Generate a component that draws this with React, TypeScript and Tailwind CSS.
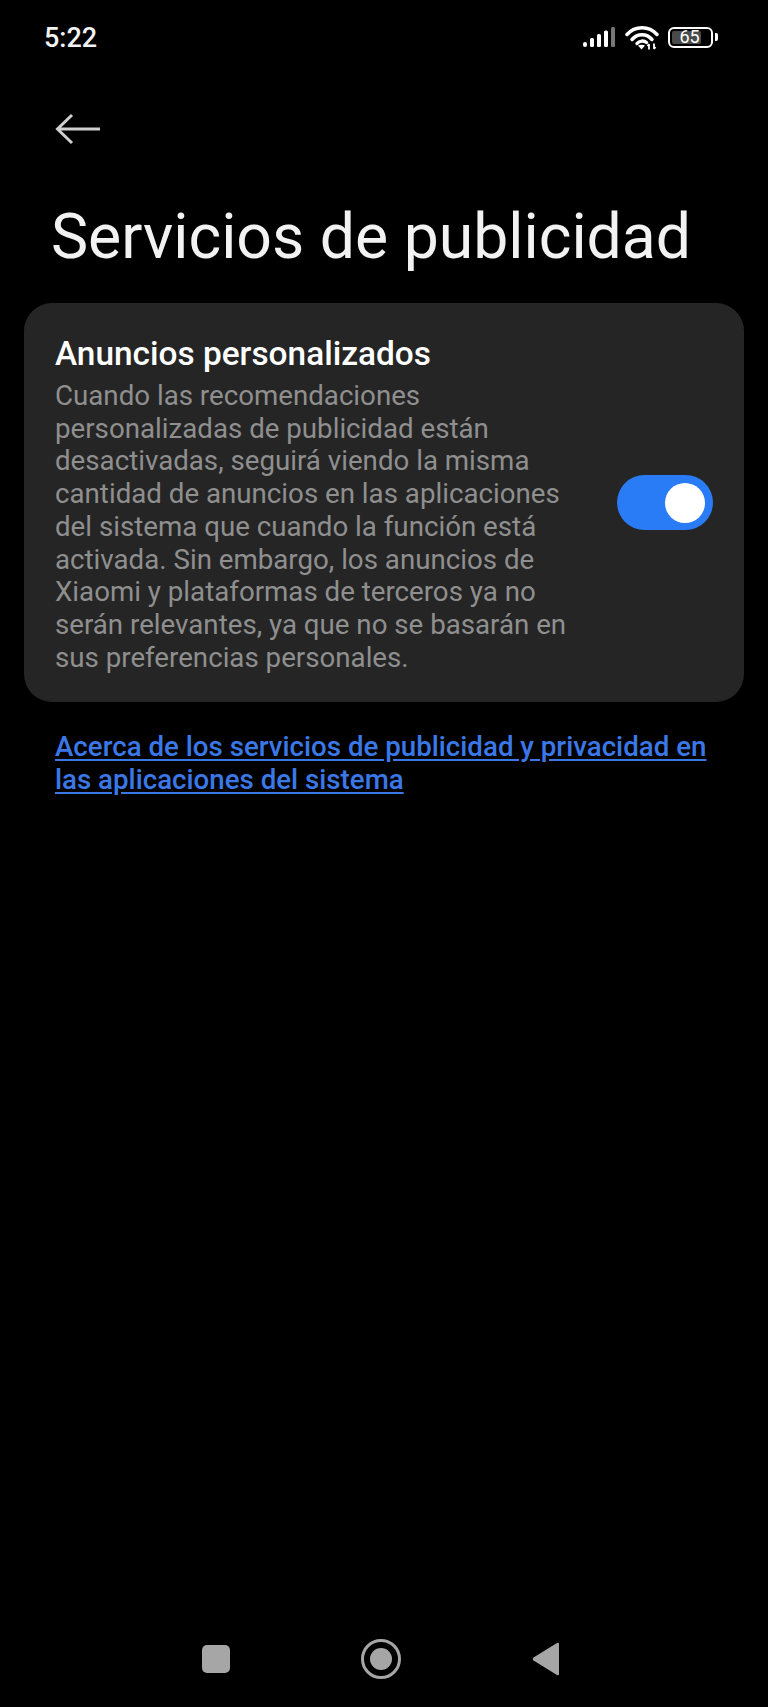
function SignalIcon() {
  return (
    <svg width="33" height="21" viewBox="0 0 33 21" fill="none">
      <rect x="0" y="15" width="4" height="5" rx="2" fill="#fff" />
      <rect x="7" y="11" width="4" height="9" rx="1.5" fill="#fff" />
      <rect x="14" y="7" width="4" height="13" rx="1.5" fill="#fff" />
      <rect x="21" y="3.5" width="4" height="16.5" rx="1.5" fill="#fff" />
      <rect x="28" y="0" width="4" height="20" rx="1.5" fill="#777" />
    </svg>
  );
}

function WifiIcon() {
  return (
    <svg width="34" height="25" viewBox="0 0 34 25" fill="none">
      <path d="M2 9.5C10 0.5 24 0.5 32 9.5" stroke="#fff" strokeWidth="3.5" strokeLinecap="round" />
      <path d="M7 14.5C12.5 8 21.5 8 27 14.5" stroke="#fff" strokeWidth="3.5" strokeLinecap="round" />
      <path d="M12 18.5C14.5 15.5 19 15.5 21.5 17.5" stroke="#fff" strokeWidth="3.5" strokeLinecap="round" />
      <path d="M13 20.5L16.5 24.5L20 20.5C18 19.5 15 19.5 13 20.5Z" fill="#fff" />
      <path d="M24 24.5V19M24 19L22.5 21M29 18.5V24M29 24L30.5 22" stroke="#fff" strokeWidth="1.8" />
    </svg>
  );
}

function Battery() {
  return (
    <div className="flex items-center gap-[2px]">
      <div className="relative w-[45px] h-[21px] rounded-[6px] border-2 border-white p-[2px]">
        <div className="w-[29px] h-full rounded-[2px] bg-[#4a4a4a]" />
        <span className="absolute inset-0 flex items-center justify-center text-[18px] leading-none text-white pr-[2px]">65</span>
      </div>
      <div className="w-[3px] h-[8px] rounded-r-[2px] bg-white" />
    </div>
  );
}

function StatusBar() {
  return (
    <div className="flex items-center justify-between h-[26px] mt-[25px] pl-[44px] pr-[50px]">
      <span className="text-[27px] leading-none font-medium text-[#f2f2f2]">5:22</span>
      <div className="flex items-center gap-[9px] mb-[2px]">
        <SignalIcon />
        <WifiIcon />
        <Battery />
      </div>
    </div>
  );
}

function Toggle() {
  return (
    <div className="shrink-0 flex items-center justify-end w-[96px] h-[55px] rounded-full bg-[#2a7bf6] pr-[8px]">
      <div className="w-[40px] h-[40px] rounded-full bg-white" />
    </div>
  );
}

function NavBar() {
  return (
    <div className="flex items-center justify-center mb-[28px] h-[40px] pr-[6px]">
      <div className="w-[28px] h-[28px] rounded-[5px] bg-[#a6a6a6]" />
      <div className="flex items-center justify-center w-[40px] h-[40px] rounded-full border-[3px] border-[#a6a6a6] ml-[131px]">
        <div className="w-[22px] h-[22px] rounded-full bg-[#a6a6a6]" />
      </div>
      <svg className="ml-[131px]" width="28" height="34" viewBox="0 0 28 34" fill="#a6a6a6">
        <path d="M25 1L1.5 15.5C0.5 16.2 0.5 17.8 1.5 18.5L25 33C26 33.6 27 33 27 32V2C27 1 26 0.4 25 1Z" />
      </svg>
    </div>
  );
}

export default function App() {
  return (
    <div className="flex flex-col justify-between w-[768px] h-[1707px] bg-black font-['Roboto',sans-serif]">
      <div>
        <StatusBar />
        <svg className="ml-[55px] mt-[62px] block" width="46" height="32" viewBox="0 0 46 32" fill="none" stroke="#cfcfcf" strokeWidth="3">
          <path d="M45 16H3M17 2L2.5 16L17 30" />
        </svg>
        <h1 className="mt-[56px] ml-[51px] text-[62.5px] leading-[72px] font-normal text-[#f2f2f2]">Servicios de publicidad</h1>
        <div className="flex items-center mt-[30px] mx-[24px] h-[399px] rounded-[28px] bg-[#252525] pl-[31px] pr-[31px]">
          <div className="flex-1 min-w-0 self-start pt-[29px]">
            <div className="text-[33.4px] leading-[44px] mb-[4px] font-medium text-white">Anuncios personalizados</div>
            <p className="text-[27.7px] leading-[32.7px] text-[#8f8f8f] w-[520px]">
              Cuando las recomendaciones personalizadas de publicidad están desactivadas, seguirá viendo la misma cantidad de anuncios en las aplicaciones del sistema que cuando la función está activada. Sin embargo, los anuncios de Xiaomi y plataformas de terceros ya no serán relevantes, ya que no se basarán en sus preferencias personales.
            </p>
          </div>
          <Toggle />
        </div>
        <a className="block mt-[29px] mx-[55px] text-[27.7px] leading-[32.7px] font-medium text-[#3b78e7] underline underline-offset-[3px]">
          Acerca de los servicios de publicidad y privacidad en las aplicaciones del sistema
        </a>
      </div>
      <NavBar />
    </div>
  );
}
